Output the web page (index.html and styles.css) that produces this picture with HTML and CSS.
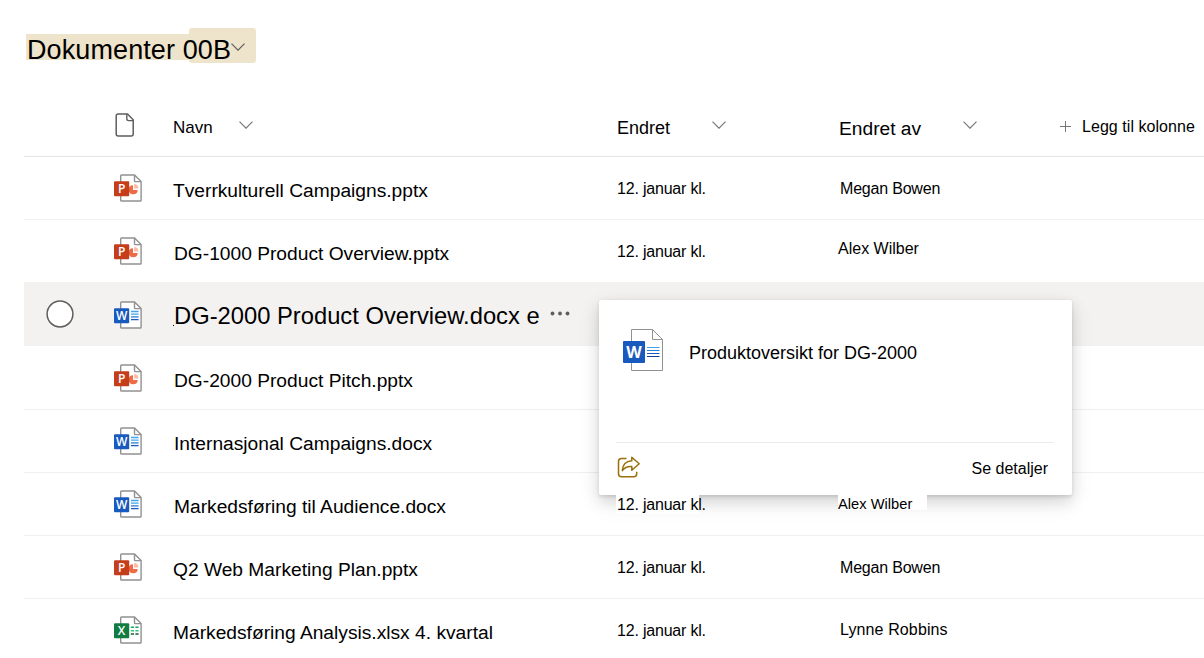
FILE: index.html
```html
<!DOCTYPE html>
<html lang="no">
<head>
    <meta charset="UTF-8">
    <meta name="viewport" content="width=device-width, initial-scale=1.0">
    <title>Dokumenter</title>
    <link rel="stylesheet" href="styles.css">
</head>
<body>
    <!-- Shared icons -->
    <svg class="sprite">
        <symbol id="chevron" viewBox="0 0 14 8">
            <path d="M0.5 0.7L7 7.2L13.5 0.7" fill="none" stroke="currentColor" stroke-width="1.2"/>
        </symbol>
        <symbol id="page" viewBox="0 0 28 28">
            <path d="M7.5 1h13l6.6 6.6V26.2q0 .8-.8.8H7.5q-.8 0-.8-.8V1.8q0-.8.8-.8z" fill="#fff" stroke="#919191" stroke-width="1.4"/>
            <path d="M20.5 1.2v5.6q0 .8.8.8h5.6" fill="none" stroke="#919191" stroke-width="1.4"/>
        </symbol>
        <symbol id="pptx" viewBox="0 0 28 28">
            <use href="#page"/>
            <path d="M19 11.2a4.5 4.5 0 1 0 4.7 4.7h-4.7z" fill="#ed6c47"/>
            <path d="M20.2 10v4.4h4.2a4.2 4.2 0 0 0-4.2-4.4z" fill="#ffb9a3"/>
            <rect y="7.2" width="15.2" height="15" rx="1" fill="#c43e1c"/>
            <text x="7.7" y="19" class="letter">P</text>
        </symbol>
        <symbol id="docx" viewBox="0 0 28 28">
            <use href="#page"/>
            <path d="M17 10.5h7.6M17 13.2h7.6" stroke="#41a5ee" stroke-width="1.3"/>
            <path d="M17 15.9h7.6" stroke="#2b7cd3" stroke-width="1.3"/>
            <path d="M17 18.6h7.6" stroke="#185abd" stroke-width="1.3"/>
            <rect y="7.2" width="15.2" height="15" rx="1" fill="#185abd"/>
            <text x="7.6" y="19" class="letter">W</text>
        </symbol>
        <symbol id="xlsx" viewBox="0 0 28 28">
            <use href="#page"/>
            <path d="M16.8 11.3h3.2M21.4 11.3h3.2" stroke="#21a366" stroke-width="1.5"/>
            <path d="M16.8 14.7h3.2M21.4 14.7h3.2" stroke="#33c481" stroke-width="1.5"/>
            <path d="M16.8 18.1h3.2M21.4 18.1h3.2" stroke="#185c37" stroke-width="1.5"/>
            <rect y="7.2" width="15.2" height="15" rx="1" fill="#107c41"/>
            <text x="7.6" y="19" class="letter">X</text>
        </symbol>
    </svg>

    <div class="title-bar">
        <h1 class="title">Dokumenter 00B</h1>
        <svg class="title-chevron"><use href="#chevron"/></svg>
    </div>

    <div class="list">
        <div class="row header">
            <div class="type">
                <svg class="file-icon" viewBox="0 0 20 24">
                    <path d="M3.2 1h9.3L18.2 6.8V21q0 2-2 2H3.2q-2 0-2-2V3q0-2 2-2z" fill="none" stroke="#605e5c" stroke-width="1.5"/>
                    <path d="M11.8 1.2v4.6q0 1.8 1.8 1.8h4.4" fill="none" stroke="#605e5c" stroke-width="1.4"/>
                </svg>
            </div>
            <div class="name">Navn<svg class="chevron"><use href="#chevron"/></svg></div>
            <div class="date">Endret<svg class="chevron"><use href="#chevron"/></svg></div>
            <div class="author">Endret av<svg class="chevron"><use href="#chevron"/></svg></div>
            <div class="add">
                <svg class="plus" viewBox="0 0 11 11"><path d="M5.5 0v11M0 5.5h11" stroke="#797775" stroke-width="1"/></svg>
                <span>Legg til kolonne</span>
            </div>
        </div>

        <div class="row">
            <div class="type"><svg class="doc-icon"><use href="#pptx"/></svg></div>
            <div class="name">Tverrkulturell Campaigns.pptx</div>
            <div class="date">12. januar kl.</div>
            <div class="author tight">Megan Bowen</div>
        </div>
        <div class="row before-hover">
            <div class="type"><svg class="doc-icon"><use href="#pptx"/></svg></div>
            <div class="name indent">DG-1000 Product Overview.pptx</div>
            <div class="date">12. januar kl.</div>
            <div class="author raised">Alex Wilber</div>
        </div>
        <div class="row hover">
            <div class="select">
                <svg class="circle" viewBox="0 0 28 28"><circle cx="14" cy="14" r="12.9" fill="#fff" stroke="#605e5c" stroke-width="1.5"/></svg>
            </div>
            <div class="type"><svg class="doc-icon"><use href="#docx"/></svg></div>
            <div class="name"><span class="dot"></span>DG-2000 Product Overview.docx e
                <svg class="more" viewBox="0 0 20 5"><circle cx="2.5" cy="2.5" r="1.9"/><circle cx="10" cy="2.5" r="1.9"/><circle cx="17.5" cy="2.5" r="1.9"/></svg>
            </div>
        </div>
        <div class="row after-hover">
            <div class="type"><svg class="doc-icon"><use href="#pptx"/></svg></div>
            <div class="name indent">DG-2000 Product Pitch.pptx</div>
        </div>
        <div class="row">
            <div class="type"><svg class="doc-icon"><use href="#docx"/></svg></div>
            <div class="name indent">Internasjonal Campaigns.docx</div>
        </div>
        <div class="row below-card">
            <div class="type"><svg class="doc-icon"><use href="#docx"/></svg></div>
            <div class="name indent">Markedsføring til Audience.docx</div>
            <div class="date">12. januar kl.</div>
            <div class="author">Alex Wilber</div>
        </div>
        <div class="row">
            <div class="type"><svg class="doc-icon"><use href="#pptx"/></svg></div>
            <div class="name">Q2 Web Marketing Plan.pptx</div>
            <div class="date">12. januar kl.</div>
            <div class="author tight">Megan Bowen</div>
        </div>
        <div class="row last">
            <div class="type"><svg class="doc-icon"><use href="#xlsx"/></svg></div>
            <div class="name">Markedsføring Analysis.xlsx 4. kvartal</div>
            <div class="date">12. januar kl.</div>
            <div class="author robbins">Lynne Robbins</div>
        </div>
    </div>

    <!-- Hover card -->
    <div class="card">
        <div class="card-body">
            <svg class="card-icon" viewBox="0 0 40 42">
                <path d="M8.5.5h21l10 10v31h-31z" fill="#fff" stroke="#919191"/>
                <path d="M29.5.5v10h10" fill="none" stroke="#919191"/>
                <path d="M24 18.5h12.5" stroke="#41a5ee"/>
                <path d="M24 21.5h12.5" stroke="#2b7cd3"/>
                <path d="M24 24.5h12.5" stroke="#185abd"/>
                <path d="M24 27.5h12.5" stroke="#103f91"/>
                <rect y="12" width="22" height="22" rx="1" fill="#185abd"/>
                <text x="11" y="28.7" class="letter letter-big">W</text>
            </svg>
            <div class="card-title">Produktoversikt for DG-2000</div>
        </div>
        <div class="card-footer">
            <svg class="share" viewBox="0 0 24 22">
                <path d="M9.5 2.5H4.5q-3 0-3 3v12.3q0 3 3 3h12.2q3 0 3-3v-2" fill="none" stroke="#986f0b" stroke-width="1.5"/>
                <path d="M14.8 1.2l7.4 6.6l-7.4 6.4v-3.7Q8.6 10 5.3 14.6Q5.8 5.5 14.8 4.8z" fill="none" stroke="#986f0b" stroke-width="1.5" stroke-linejoin="round"/>
            </svg>
            <div class="details">Se detaljer</div>
        </div>
    </div>
</body>
</html>
```

FILE: styles.css
```css
body {
    background-color: #ffffff;
    font-family: "Liberation Sans", Arial, sans-serif;
    color: #000000;
    margin: 0;
    height: 658px;
    overflow: hidden;
    position: relative;
}

.sprite {
    display: none;
}

.letter {
    font-family: "Open Sans", sans-serif;
    font-size: 12px;
    font-weight: 600;
    fill: #ffffff;
    text-anchor: middle;
}

.letter-big {
    font-size: 16px;
    font-weight: bold;
}

/* Title */
.title-bar {
    display: flex;
    box-sizing: border-box;
    width: 230px;
    height: 63px;
    margin-left: 26px;
    padding-top: 28px;
    background: linear-gradient(#eee4cb, #eee4cb) 0 34px / 170px 26px no-repeat;
    position: relative;
}

.title-bar::after {
    content: "";
    position: absolute;
    left: 163px;
    top: 28px;
    width: 67px;
    height: 35px;
    border-radius: 3px;
    background-color: #eee4cb;
    z-index: -1;
}

.title {
    margin: 0;
    padding: 7px 0 0 1px;
    width: 204px;
    font-size: 27px;
    line-height: 31px;
    font-weight: normal;
    letter-spacing: 0.1px;
    white-space: nowrap;
}

.title-chevron {
    width: 14px;
    height: 8px;
    margin-top: 15px;
    color: #605e5c;
}

/* File list */
.list {
    margin-left: 24px;
    padding-top: 30px;
}

.row {
    display: grid;
    grid-template-columns: 90px 59px 444px 222px 1fr;
    align-items: center;
    height: 62px;
    border-bottom: 1px solid #f1f0ef;
    white-space: nowrap;
}

.select {
    grid-column: 1;
    display: flex;
    padding-left: 22px;
}

.circle {
    width: 28px;
    height: 28px;
    margin-bottom: 3px;
}

.type {
    grid-column: 2;
    display: flex;
}

.name {
    grid-column: 3;
    padding-top: 6px;
    font-size: 19.2px;
}

.indent {
    padding-left: 1px;
}

.date {
    grid-column: 4;
    padding-top: 2px;
    font-size: 16px;
    letter-spacing: -0.2px;
}

.author {
    grid-column: 5;
    padding-top: 2px;
    font-size: 16px;
}

.tight {
    padding-left: 1px;
    letter-spacing: -0.2px;
}

.raised {
    margin-left: -1px;
    padding-bottom: 6px;
}

.robbins {
    padding: 0 0 0 1px;
    letter-spacing: 0.12px;
}

.doc-icon {
    width: 28px;
    height: 28px;
}

.last {
    border-bottom: none;
}

/* Header row */
.header {
    grid-template-columns: 90px 59px 444px 222px 221px 1fr;
    height: 63px;
    border-color: #e8e6e4;
}

.header .name,
.header .date,
.header .author {
    display: flex;
    align-items: baseline;
    letter-spacing: 0;
}

.header .name {
    padding-top: 7px;
    font-size: 17px;
}

.header .date {
    padding-top: 7px;
    font-size: 18px;
}

.header .author {
    padding-top: 9px;
    font-size: 19.2px;
}

.add {
    display: flex;
    align-items: center;
    gap: 11px;
    padding-top: 4px;
    font-size: 16px;
    letter-spacing: 0.05px;
}

.file-icon {
    width: 20px;
    height: 24px;
    margin-left: 1px;
}

.chevron {
    width: 14px;
    height: 8px;
    margin-left: 26px;
    padding-bottom: 4px;
    color: #797775;
}

.header .date .chevron {
    margin-left: 42px;
    padding-bottom: 5px;
}

.header .author .chevron {
    margin-left: 42px;
    padding-bottom: 6px;
}

.plus {
    width: 11px;
    height: 11px;
    margin-bottom: 1px;
}

/* Hovered row */
.before-hover {
    border-bottom: none;
}

.hover {
    box-sizing: border-box;
    height: 64px;
    padding-top: 2px;
    border-bottom: none;
    background-color: #f3f2f1;
}

.hover .name {
    display: flex;
    align-items: center;
    padding-top: 2px;
    font-size: 23.75px;
}

.hover .doc-icon {
    margin-bottom: 1px;
}

.dot {
    width: 1px;
    height: 1px;
    margin-top: 18px;
    background-color: #000000;
}

.more {
    width: 20px;
    height: 5px;
    margin: 0 0 5px 10px;
    fill: #605e5c;
}

.after-hover {
    padding-top: 1px;
}

/* Cells that sit on top of the card's shadow */
.below-card .date,
.below-card .author {
    position: relative;
    z-index: 2;
    align-self: start;
    box-sizing: border-box;
    margin-top: 22px;
    padding-top: 0;
}

.below-card .date {
    width: 100px;
    height: 19px;
    line-height: 19px;
    margin-left: -1px;
    padding-left: 1px;
    background: linear-gradient(#ffffff, #ffffff) 0 0 / 83px 19px no-repeat;
}

.below-card .author {
    width: 89px;
    height: 15px;
    margin-left: -1px;
    line-height: 18px;
    font-size: 14.7px;
    background-color: #ffffff;
}

/* Hover card */
.card {
    position: absolute;
    left: 599px;
    top: 300px;
    width: 473px;
    height: 195px;
    box-sizing: border-box;
    padding: 0 18px 0 17px;
    border-radius: 2px;
    background-color: #ffffff;
    box-shadow: 0 6.4px 14.4px rgba(0, 0, 0, 0.132), 0 1.2px 3.6px rgba(0, 0, 0, 0.108), 0 8px 28px rgba(0, 0, 0, 0.06);
    z-index: 1;
}

.card-body {
    display: flex;
    align-items: flex-start;
    height: 142px;
    border-bottom: 1px solid #eaeaea;
}

.card-icon {
    width: 40px;
    height: 42px;
    margin: 29px 0 0 7px;
}

.card-title {
    margin: 43px 0 0 26px;
    font-size: 18px;
}

.card-footer {
    display: flex;
    justify-content: space-between;
    align-items: center;
    height: 50px;
    padding-right: 6px;
}

.share {
    width: 24px;
    height: 22px;
    margin: 0 0 2px 1px;
}

.details {
    padding-top: 1px;
    font-size: 16px;
}
```
